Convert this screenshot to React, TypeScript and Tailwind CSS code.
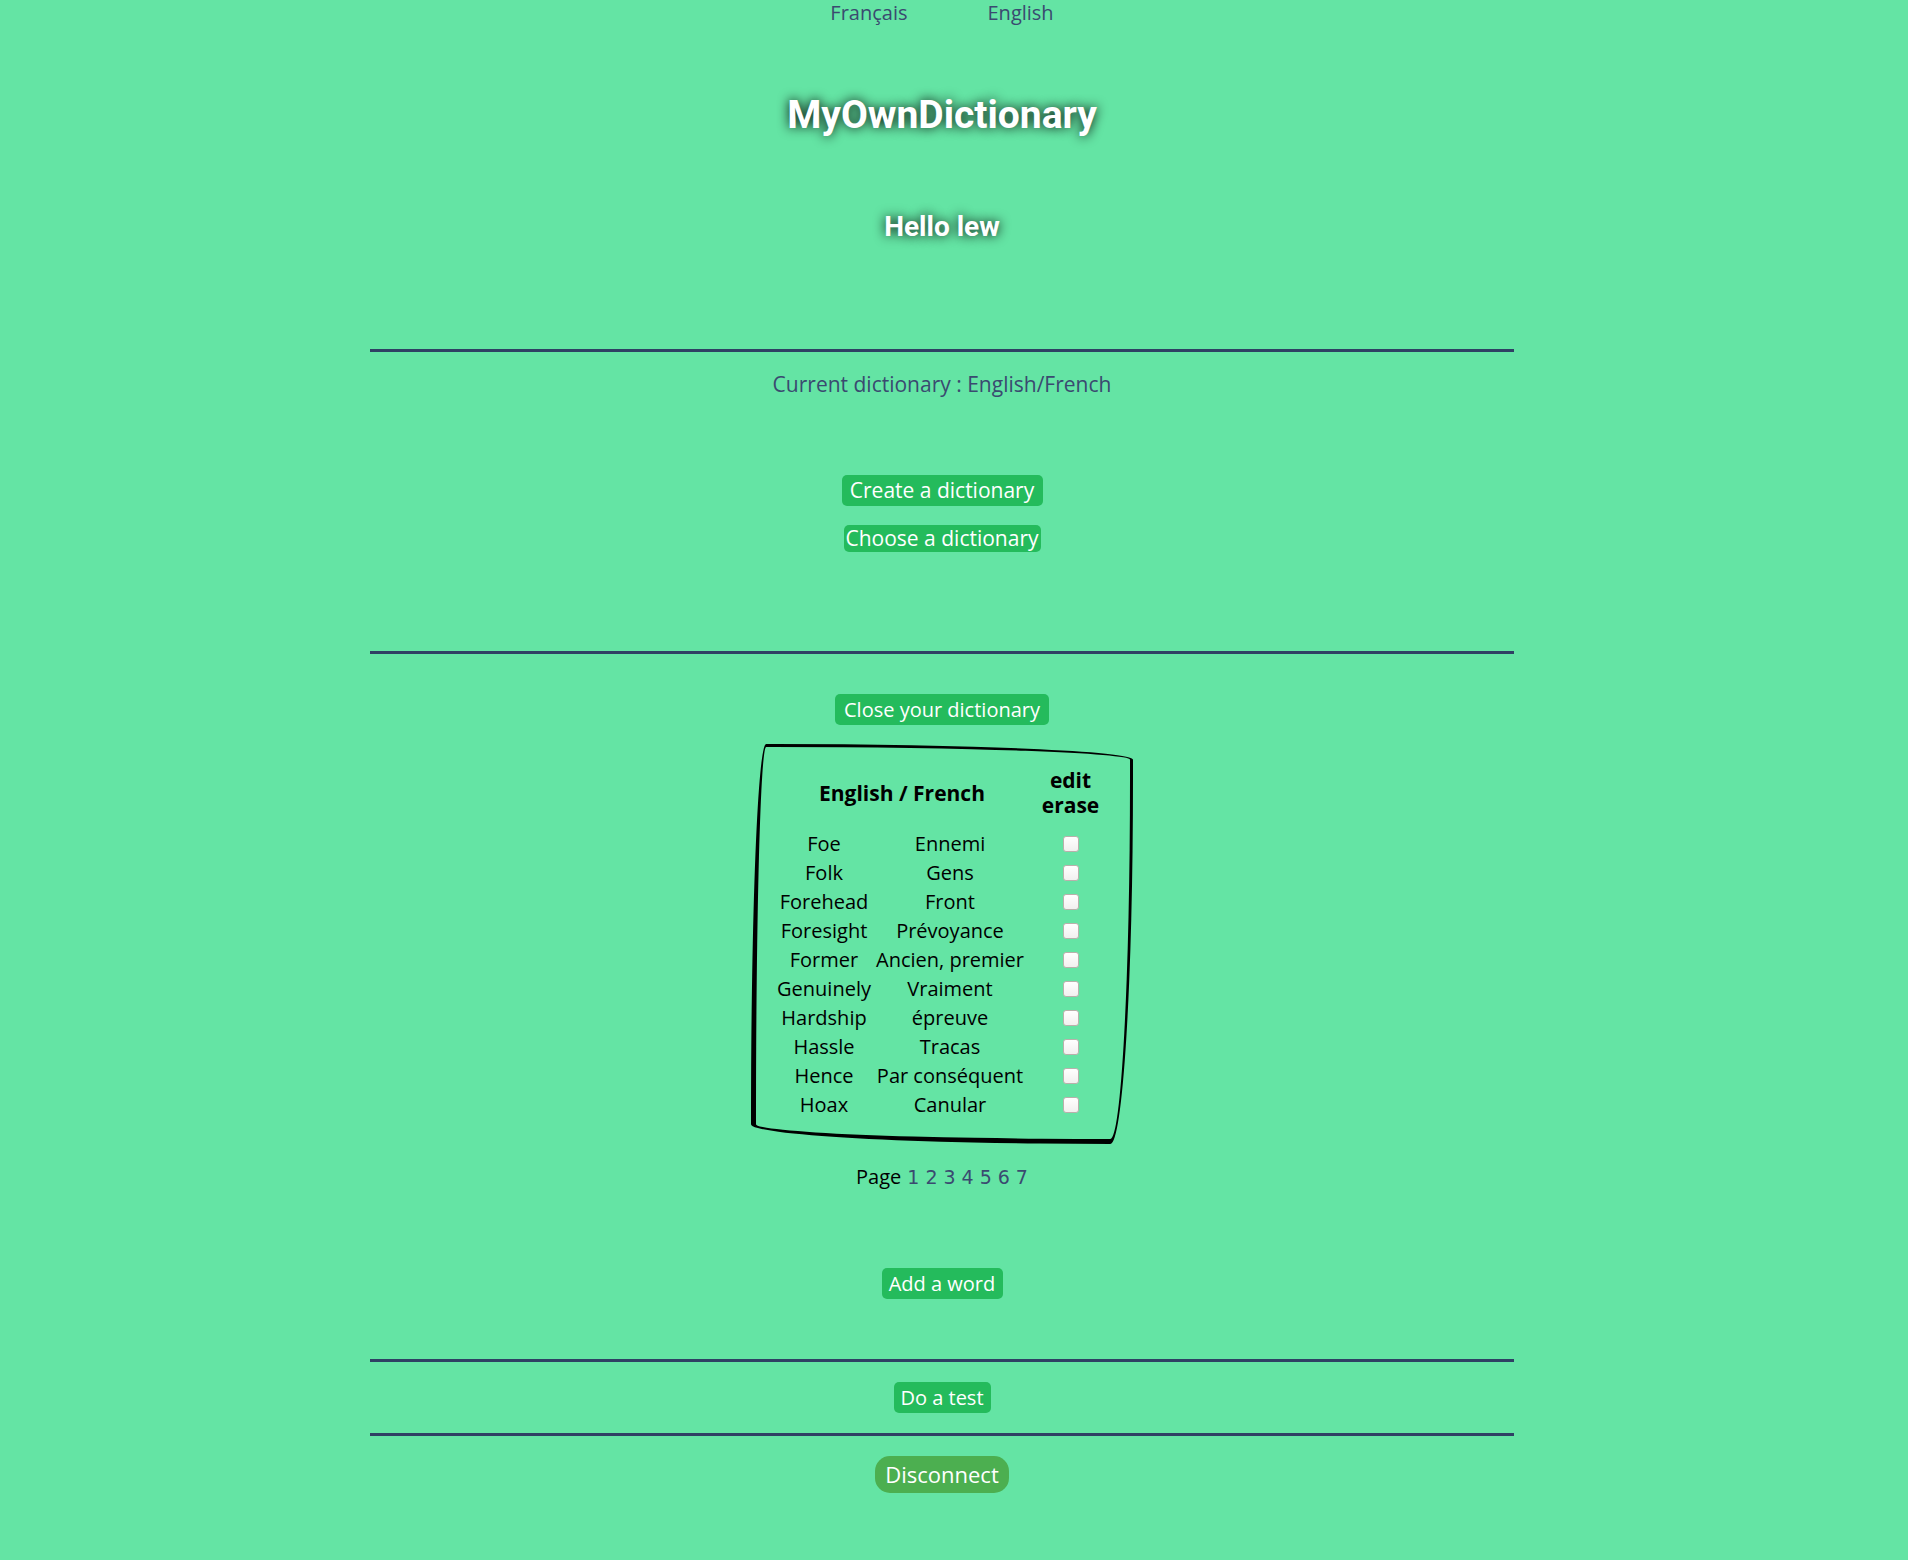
import React from "react";

const words: [string, string][] = [
  ["Foe", "Ennemi"],
  ["Folk", "Gens"],
  ["Forehead", "Front"],
  ["Foresight", "Prévoyance"],
  ["Former", "Ancien, premier"],
  ["Genuinely", "Vraiment"],
  ["Hardship", "épreuve"],
  ["Hassle", "Tracas"],
  ["Hence", "Par conséquent"],
  ["Hoax", "Canular"],
];

const pages = [1, 2, 3, 4, 5, 6, 7];

function Rule({ className }: { className: string }) {
  return <hr className={`h-[3px] w-[60vw] border-0 bg-[#2f4064] ${className}`} />;
}

function Action({ label, className }: { label: string; className: string }) {
  return (
    <button type="button" className={`rounded-[5px] bg-[#24bb5c] text-center text-white ${className}`}>
      {label}
    </button>
  );
}

export default function App() {
  return (
    <div className="flex min-h-screen flex-col items-center bg-[#64e4a4] pr-6 pb-16 font-['Open_Sans',sans-serif] text-[20px] leading-[25px] text-black">
      <nav className="flex gap-20 text-[#3a4a70]">
        <a href="#fr">Français</a>
        <a href="#en">English</a>
      </nav>

      <h1 className="mt-[66px] font-['Roboto',sans-serif] text-[39px] leading-[48px] font-bold text-white [text-shadow:0_0_12px_black]">
        MyOwnDictionary
      </h1>
      <h2 className="mt-[70px] font-['Roboto',sans-serif] text-[28px] leading-[36px] font-bold text-white [text-shadow:0_0_12px_black]">
        Hello lew
      </h2>

      <Rule className="mt-[104px]" />
      <p className="mt-5 text-[21px] text-[#3a4a70]">Current dictionary : English/French</p>
      <Action label="Create a dictionary" className="mt-[78px] min-w-[201px] text-[21px] leading-[31px]" />
      <Action label="Choose a dictionary" className="mt-[19px] min-w-[197px] text-[21px] leading-[27px]" />

      <Rule className="mt-[99px]" />
      <Action label="Close your dictionary" className="mt-10 min-w-[214px] leading-[31px]" />

      <div className="mt-[19px] rounded-[4%_95%_6%_95%/95%_4%_92%_5%] border-t-3 border-r-3 border-b-5 border-l-5 border-black py-5 pr-[17px] pl-5">
        <table className="table-fixed border-collapse text-center">
          <colgroup>
            <col className="w-24" />
            <col className="w-[156px]" />
            <col className="w-[85px]" />
          </colgroup>
          <thead>
            <tr className="h-[62px] text-[21px] leading-[25px]">
              <th colSpan={2} className="px-0 pt-0 pb-2.5 align-middle font-bold">
                English / French
              </th>
              <th className="px-0 pt-0 pb-2.5 align-middle font-bold">
                edit
                <br />
                erase
              </th>
            </tr>
          </thead>
          <tbody>
            {words.map(([en, fr]) => (
              <tr key={en} className="leading-[29px]">
                <td className="p-0 whitespace-nowrap">{en}</td>
                <td className="p-0 whitespace-nowrap">{fr}</td>
                <td className="p-0 align-middle">
                  <input
                    type="checkbox"
                    aria-label={`Edit or erase ${en}`}
                    className="mx-auto block size-4 appearance-none rounded-[3px] border border-[#b9b0ab] bg-linear-to-b from-white to-[#f2f0ef]"
                  />
                </td>
              </tr>
            ))}
          </tbody>
        </table>
      </div>

      <nav className="mt-5 flex items-baseline gap-1.5">
        <span>Page</span>
        {pages.map((n) => (
          <a key={n} href={`#page-${n}`} className="font-['DejaVu_Sans',sans-serif] text-[19px] text-[#3a4a70]">
            {n}
          </a>
        ))}
      </nav>

      <Action label="Add a word" className="mt-[78px] min-w-[121px] leading-[31px]" />
      <Rule className="mt-[60px]" />
      <Action label="Do a test" className="mt-5 min-w-[97px] leading-[31px]" />
      <Rule className="mt-5" />
      <button
        type="button"
        className="mt-5 min-w-[134px] rounded-[15px] bg-[#4caf50] text-center text-[22px] leading-[37px] text-white"
      >
        Disconnect
      </button>
    </div>
  );
}
